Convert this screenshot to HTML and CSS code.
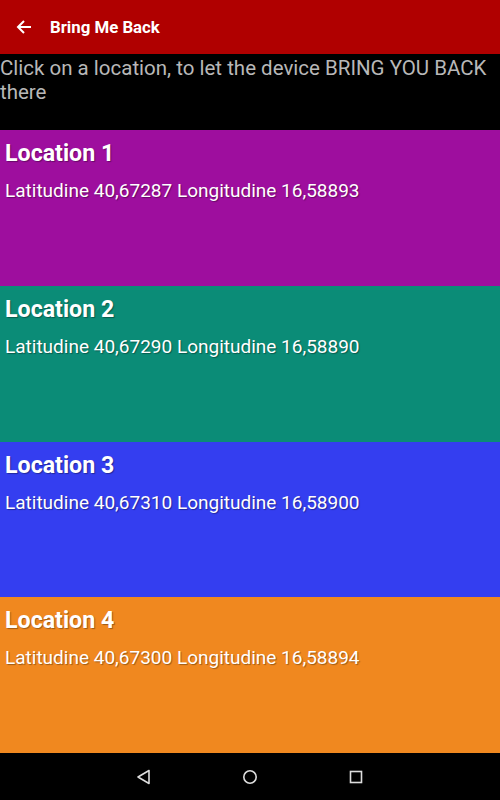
FILE: index.html
```html
<!DOCTYPE html>
<html lang="en">
<head>
  <meta charset="UTF-8" />
  <meta name="viewport" content="width=device-width, initial-scale=1" />
  <title>Bring Me Back</title>
  <link rel="stylesheet" href="styles.css">
</head>
<body>
  <header class="toolbar">
    <svg class="back-icon" width="16" height="16" viewBox="0 0 16 16">
      <path d="M15 8H2M8 2L2 8l6 6" fill="none" stroke="#fff" stroke-width="2"/>
    </svg>
    <span class="toolbar-title">Bring Me Back</span>
  </header>

  <div class="intro">Click on a location, to let the device BRING YOU BACK there</div>

  <main class="locations">
    <div class="location purple">
      <div class="location-name">Location 1</div>
      <div class="location-coords">Latitudine 40,67287 Longitudine 16,58893</div>
    </div>
    <div class="location teal">
      <div class="location-name">Location 2</div>
      <div class="location-coords">Latitudine 40,67290 Longitudine 16,58890</div>
    </div>
    <div class="location blue">
      <div class="location-name">Location 3</div>
      <div class="location-coords">Latitudine 40,67310 Longitudine 16,58900</div>
    </div>
    <div class="location orange">
      <div class="location-name">Location 4</div>
      <div class="location-coords">Latitudine 40,67300 Longitudine 16,58894</div>
    </div>
  </main>

  <nav class="navbar">
    <svg width="16" height="16" viewBox="0 0 16 16">
      <path d="M13 1.5v13L2 8z" fill="none" stroke="#ddd" stroke-width="1.6" stroke-linejoin="round"/>
    </svg>
    <svg width="16" height="16" viewBox="0 0 16 16">
      <circle cx="8" cy="8" r="6.2" fill="none" stroke="#ddd" stroke-width="1.6"/>
    </svg>
    <svg width="16" height="16" viewBox="0 0 16 16">
      <rect x="2.5" y="2.5" width="11" height="11" fill="none" stroke="#ddd" stroke-width="1.6"/>
    </svg>
  </nav>
</body>
</html>
```

FILE: styles.css
```css
html, body {
  height: 100%;
}
body {
  margin: 0;
  font-family: Roboto, 'Noto Sans', sans-serif;
  background: #000;
  display: flex;
  flex-direction: column;
}
.toolbar {
  height: 54px;
  flex: none;
  background: #b00000;
  color: #fff;
  display: flex;
  align-items: center;
  padding-left: 16px;
  box-sizing: border-box;
}
.back-icon {
  margin-right: 18px;
}
.toolbar-title {
  font-size: 16.8px;
  font-weight: 700;
}
.intro {
  height: 76px;
  flex: none;
  box-sizing: border-box;
  padding-top: 2px;
  color: #b8b8b8;
  font-size: 20.5px;
  line-height: 24px;
}
.locations {
  flex: 1;
  display: flex;
  flex-direction: column;
}
.location {
  flex: 1;
  padding: 9px 5px 0;
  color: #fff;
  text-shadow: 1px 1px 1px rgba(0,0,0,0.35);
}
.location-name {
  font-size: 23.2px;
  font-weight: 700;
  line-height: 28px;
}
.location-coords {
  margin-top: 12px;
  font-size: 19px;
  line-height: 24px;
}
.purple { background: #9e0e9e; }
.teal { background: #0b8c77; }
.blue { background: #343ef0; }
.orange { background: #f0881f; }
.navbar {
  height: 47px;
  flex: none;
  background: #000;
  display: flex;
  justify-content: center;
  align-items: center;
  gap: 90px;
}
```
